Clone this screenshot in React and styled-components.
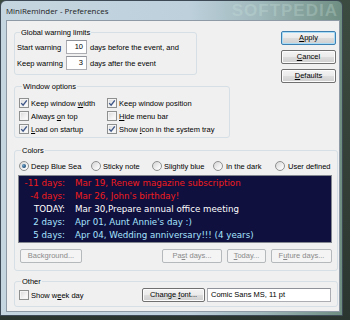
import React from "react";
import styled, { createGlobalStyle } from "styled-components";

const GlobalStyle = createGlobalStyle`
  html, body { margin: 0; padding: 0; }
  body {
    width: 350px;
    height: 320px;
    overflow: hidden;
    background: linear-gradient(180deg, #3c4b3f 0%, #2b3530 100%);
    font-family: "Liberation Sans", Arial, sans-serif;
  }
`;

const Window = styled.div`
  width: 343px;
  height: 316px;
  box-sizing: border-box;
  border: 1px solid #3d4a55;
  border-radius: 6px 6px 0 0;
  padding: 0 2px 3px 5px;
  display: flex;
  flex-direction: column;
  background: linear-gradient(90deg, #c6d6e0 0%, #bdd0dc 55%, #9fb8bb 76%, #6f8e82 100%);
`;

const TitleBar = styled.div`
  height: 19px;
  display: flex;
  align-items: center;
  overflow: hidden;
`;

const Title = styled.span`
  font-family: "Open Sans", "Liberation Sans", sans-serif;
  font-size: 7.9px;
  color: #1b1b1b;
`;

const Watermark = styled.span`
  margin-left: auto;
  margin-right: 2px;
  font-family: "Liberation Sans", sans-serif;
  font-weight: bold;
  font-size: 17px;
  letter-spacing: 1px;
  color: rgba(205, 230, 222, 0.28);
`;

const Client = styled.div`
  flex: 1;
  background: #f0f0f0;
  border: 1px solid #8e9ba6;
  padding: 7px 1px 0 7px;
  display: flex;
  flex-direction: column;
  font-size: 7.5px;
  color: #000;
`;

const TopRow = styled.div`
  display: flex;
`;

const LeftCol = styled.div`
  width: 216px;
  display: flex;
  flex-direction: column;
  gap: 7px;
`;

const ButtonCol = styled.div`
  margin-left: auto;
  margin-right: 2px;
  padding-top: 3px;
  width: 55px;
  display: flex;
  flex-direction: column;
  gap: 5px;
`;

const Group = styled.fieldset`
  margin: ${(p) => p.$mt || 0}px 0 0;
  padding: ${(p) => p.$pad};
  width: ${(p) => (p.$w ? `${p.$w}px` : "auto")};
  box-sizing: border-box;
  min-width: 0;
  border: 1px solid #d5dfe5;
  border-radius: 3px;
`;

const Legend = styled.legend`
  margin-left: 3px;
  padding: 0 1px;
  line-height: 9px;
  font-size: 7.5px;
`;

const FieldRow = styled.div`
  display: flex;
  align-items: center;
  height: 14px;
`;

const FieldLabel = styled.span`
  width: 49px;
`;

const NumBox = styled.div`
  width: 21px;
  height: 14px;
  box-sizing: border-box;
  background: #fff;
  border: 1px solid #abadb3;
  border-top-color: #8f9399;
  text-align: right;
  padding-right: 3px;
  line-height: 12px;
  margin-right: 3px;
`;

const RowStack = styled.div`
  display: flex;
  flex-direction: column;
  gap: ${(p) => p.$gap}px;
`;

const OptGrid = styled.div`
  display: grid;
  grid-template-columns: 88px auto;
  grid-auto-rows: 12px;
  row-gap: 1px;
`;

const CheckLabel = styled.label`
  display: flex;
  align-items: center;
  gap: 2px;
  white-space: nowrap;
`;

const Box = styled.span`
  width: 10px;
  height: 10px;
  box-sizing: border-box;
  border: 1px solid #8e8f8f;
  background: linear-gradient(135deg, #d8d8d8 0%, #f2f2f2 60%, #ffffff 100%);
  box-shadow: inset 0 0 0 1px #f4f4f4;
  display: flex;
  align-items: center;
  justify-content: center;
`;

const Round = styled.span`
  width: 10px;
  height: 10px;
  box-sizing: border-box;
  border-radius: 50%;
  border: 1px solid #8e8f8f;
  background: linear-gradient(135deg, #d4d4d4 0%, #f6f6f6 70%, #ffffff 100%);
  display: flex;
  align-items: center;
  justify-content: center;

  &::after {
    content: "";
    display: ${(p) => (p.$on ? "block" : "none")};
    width: 4px;
    height: 4px;
    border-radius: 50%;
    background: radial-gradient(circle at 35% 35%, #6fa3c8 0%, #1f4d78 70%, #163858 100%);
  }
`;

const RadioRow = styled.div`
  margin-left: 1px;
  display: grid;
  grid-template-columns: 72px 61px 61px 62px auto;
  height: 10px;
`;

const RadioLabel = styled.label`
  display: flex;
  align-items: center;
  gap: ${(p) => p.$gap || 2}px;
  white-space: nowrap;
`;

const ListBox = styled.div`
  margin-top: 4px;
  height: 68px;
  box-sizing: border-box;
  border: 1px solid #828790;
  background: #10103e;
  padding-top: 1px;
  overflow: hidden;
  font-family: "DejaVu Sans", sans-serif;
  font-size: 8.7px;
`;

const Line = styled.div`
  display: grid;
  grid-template-columns: 46px auto;
  column-gap: 10px;
  height: 13px;
  line-height: 13px;
  white-space: nowrap;
  color: ${(p) => p.$color};
`;

const Days = styled.span`
  text-align: right;
`;

const ButtonRow = styled.div`
  margin-top: 6px;
  display: flex;
  justify-content: space-between;
  padding-left: 2px;
`;

const ButtonGroup = styled.div`
  display: flex;
  gap: 5px;
`;

const Button = styled.button`
  width: ${(p) => p.$w}px;
  height: 14px;
  padding: 0;
  box-sizing: border-box;
  font-family: inherit;
  font-size: 7.5px;
  line-height: 12px;
  border-radius: 2px;
  color: ${(p) => (p.disabled ? "#8a8a8a" : "#000")};
  border: 1px solid ${(p) => (p.disabled ? "#b5b9bc" : p.$default ? "#3c7fb1" : "#707070")};
  background: ${(p) =>
    p.disabled
      ? "#f4f4f4"
      : "linear-gradient(180deg, #f3f3f3 0%, #ebebeb 48%, #dddddd 52%, #cfcfcf 100%)"};
  box-shadow: ${(p) =>
    p.$default ? "inset 0 0 0 1px #a9dcf6" : p.disabled ? "none" : "inset 0 0 0 1px #fcfcfc"};
`;

const OtherRow = styled.div`
  display: flex;
  align-items: center;
  height: 14px;
  padding-left: 1px;
`;

const FontBox = styled.div`
  margin-left: 2px;
  margin-right: 1px;
  width: 124px;
  height: 14px;
  box-sizing: border-box;
  background: #fff;
  border: 1px solid #abadb3;
  border-top-color: #8f9399;
  padding-left: 3px;
  line-height: 12px;
`;

const Spacer = styled.div`
  flex: 1;
`;

const CheckMark = () => (
  <svg width="8" height="8" viewBox="0 0 8 8">
    <path d="M1.2 4.1 L3.1 6.2 L6.8 1.3" fill="none" stroke="#3f5788" strokeWidth="1.4" />
  </svg>
);

const Check = ({ on, children }) => (
  <CheckLabel>
    <Box>{on && <CheckMark />}</Box>
    <span>{children}</span>
  </CheckLabel>
);

const Radio = ({ on, gap, children }) => (
  <RadioLabel $gap={gap}>
    <Round $on={on} />
    <span>{children}</span>
  </RadioLabel>
);

const reminders = [
  { days: "-11 days:", text: "Mar 19, Renew magazine subscription", color: "#f01c1c" },
  { days: "-4 days:", text: "Mar 26, John's birthday!", color: "#f01c1c" },
  { days: "TODAY:", text: "Mar 30,Prepare annual office meeting", color: "#ffffff" },
  { days: "2 days:", text: "Apr 01, Aunt Annie's day :)", color: "#a6e4ff" },
  { days: "5 days:", text: "Apr 04, Wedding anniversary!!! (4 years)", color: "#a6e4ff" },
];

const App = () => (
  <>
    <GlobalStyle />
    <Window>
      <TitleBar>
        <Title>MiniReminder - Preferences</Title>
        <Watermark>SOFTPEDIA</Watermark>
      </TitleBar>
      <Client>
        <TopRow>
          <LeftCol>
            <Group $w={183} $pad="3px 2px 4px">
              <Legend>Global warning limits</Legend>
              <RowStack $gap={2}>
                <FieldRow>
                  <FieldLabel>Start warning</FieldLabel>
                  <NumBox>10</NumBox>
                  <span>days before the event, and</span>
                </FieldRow>
                <FieldRow>
                  <FieldLabel>Keep warning</FieldLabel>
                  <NumBox>3</NumBox>
                  <span>days after the event</span>
                </FieldRow>
              </RowStack>
            </Group>
            <Group $w={216} $pad="6px 4px 2px">
              <Legend>Window options</Legend>
              <OptGrid>
                <Check on>Keep window <u>w</u>idth</Check>
                <Check on>Keep window position</Check>
                <Check>Always <u>o</u>n top</Check>
                <Check><u>H</u>ide menu bar</Check>
                <Check on><u>L</u>oad on startup</Check>
                <Check on>Show <u>i</u>con in the system tray</Check>
              </OptGrid>
            </Group>
          </LeftCol>
          <ButtonCol>
            <Button $w={55} $default><u>A</u>pply</Button>
            <Button $w={55}><u>C</u>ancel</Button>
            <Button $w={55}><u>D</u>efaults</Button>
          </ButtonCol>
        </TopRow>

        <Group $mt={8} $pad="6px 5px 7px 3px">
          <Legend>Colors</Legend>
          <RadioRow>
            <Radio on>Deep Blue Sea</Radio>
            <Radio>Sticky note</Radio>
            <Radio>Slightly blue</Radio>
            <Radio gap={3}>In the dark</Radio>
            <Radio gap={3}>User defined</Radio>
          </RadioRow>
          <ListBox>
            {reminders.map((r) => (
              <Line key={r.text} $color={r.color}>
                <Days>{r.days}</Days>
                <span>{r.text}</span>
              </Line>
            ))}
          </ListBox>
          <ButtonRow>
            <Button $w={62} disabled>Background...</Button>
            <ButtonGroup>
              <Button $w={60} disabled>Pa<u>s</u>t days...</Button>
              <Button $w={39} disabled><u>T</u>oday...</Button>
              <Button $w={61} disabled>F<u>u</u>ture days...</Button>
            </ButtonGroup>
          </ButtonRow>
        </Group>

        <Group $mt={6} $pad="2px 5px 4px 3px">
          <Legend>Other</Legend>
          <OtherRow>
            <Check>Show w<u>e</u>ek day</Check>
            <Spacer />
            <Button $w={63}>Change <u>f</u>ont...</Button>
            <FontBox>Comic Sans MS, 11 pt</FontBox>
          </OtherRow>
        </Group>
      </Client>
    </Window>
  </>
);

export default App;
